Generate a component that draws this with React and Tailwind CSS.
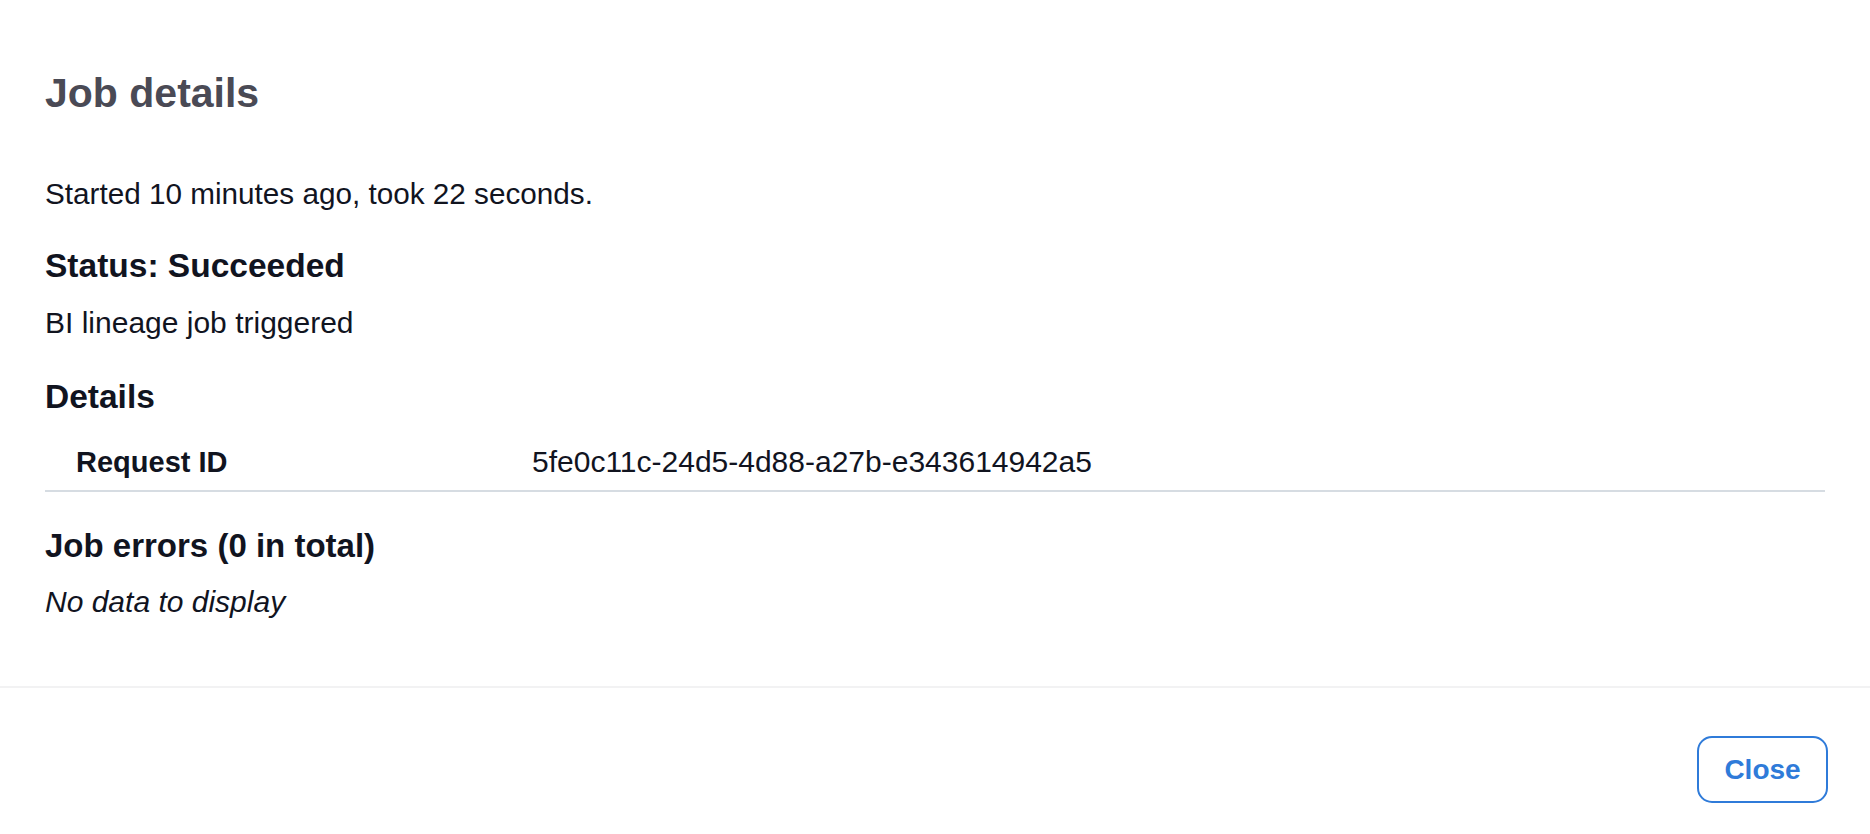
import React from 'react';

const App = () => {
  return (
    <div className="min-h-screen bg-white flex flex-col font-['Liberation_Sans',Arial,sans-serif] text-[#11141f]">
      <div className="px-[45px] pt-[69px] pb-[66px]">
        <h1 className="text-[41px] leading-[48px] font-bold text-[#4a4a55]">Job details</h1>

        <p className="mt-[59px] text-[29.7px] leading-[36px]">Started 10 minutes ago, took 22 seconds.</p>

        <h2 className="mt-[34px] text-[33.5px] leading-[40px] font-bold">Status: Succeeded</h2>
        <p className="mt-[19px] text-[30px] leading-[36px]">BI lineage job triggered</p>

        <h2 className="mt-[36px] text-[33.5px] leading-[40px] font-bold">Details</h2>
        <div className="mt-[27px] grid grid-cols-[456px_1fr] pl-[31px] pb-[10px] border-b-2 border-[#d6dce2]">
          <span className="text-[29px] leading-[36px] font-bold">Request ID</span>
          <span className="text-[30px] leading-[36px]">5fe0c11c-24d5-4d88-a27b-e343614942a5</span>
        </div>

        <h2 className="mt-[34px] text-[33px] leading-[40px] font-bold">Job errors (0 in total)</h2>
        <p className="mt-[18px] text-[30px] leading-[36px] italic">No data to display</p>
      </div>

      <div className="h-[2px] bg-[#f2f2f3]" />

      <div className="flex justify-end px-[42px] pt-[48px] pb-[30px]">
        <button className="w-[131px] h-[67px] rounded-[15px] border-2 border-[#2f7bd9] text-[#2f7bd9] text-[28px] font-bold flex items-center justify-center">
          Close
        </button>
      </div>
    </div>
  );
};

export default App;
